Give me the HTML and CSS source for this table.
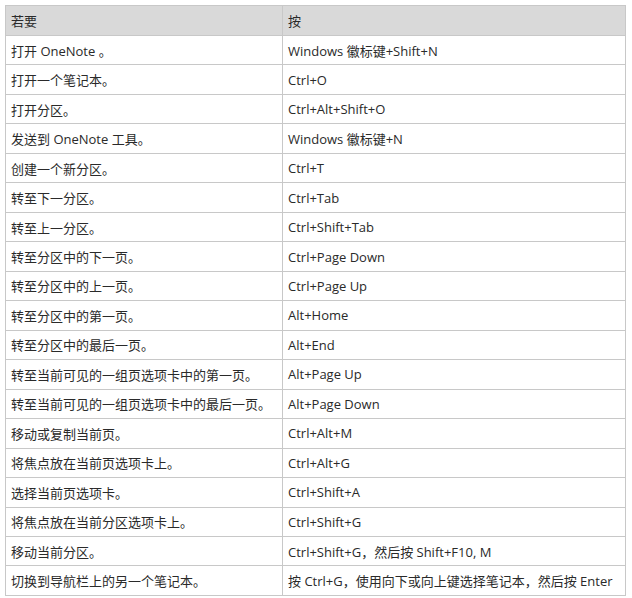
FILE: index.html
```html
<!DOCTYPE html>
<html lang="zh-CN">
<head>
<meta charset="utf-8">
<link rel="stylesheet" href="styles.css">
</head>
<body>
<table class="keys">
<thead>
<tr><th class="c1">若要</th><th class="c2">按</th></tr>
</thead>
<tbody>
<tr><td>打开 OneNote 。</td><td>Windows 徽标键+Shift+N</td></tr>
<tr><td>打开一个笔记本。</td><td>Ctrl+O</td></tr>
<tr><td>打开分区。</td><td>Ctrl+Alt+Shift+O</td></tr>
<tr><td>发送到 OneNote 工具。</td><td>Windows 徽标键+N</td></tr>
<tr><td>创建一个新分区。</td><td>Ctrl+T</td></tr>
<tr><td>转至下一分区。</td><td>Ctrl+Tab</td></tr>
<tr><td>转至上一分区。</td><td>Ctrl+Shift+Tab</td></tr>
<tr><td>转至分区中的下一页。</td><td>Ctrl+Page Down</td></tr>
<tr><td>转至分区中的上一页。</td><td>Ctrl+Page Up</td></tr>
<tr><td>转至分区中的第一页。</td><td>Alt+Home</td></tr>
<tr><td>转至分区中的最后一页。</td><td>Alt+End</td></tr>
<tr><td>转至当前可见的一组页选项卡中的第一页。</td><td>Alt+Page Up</td></tr>
<tr><td>转至当前可见的一组页选项卡中的最后一页。</td><td>Alt+Page Down</td></tr>
<tr><td>移动或复制当前页。</td><td>Ctrl+Alt+M</td></tr>
<tr><td>将焦点放在当前页选项卡上。</td><td>Ctrl+Alt+G</td></tr>
<tr><td>选择当前页选项卡。</td><td>Ctrl+Shift+A</td></tr>
<tr><td>将焦点放在当前分区选项卡上。</td><td>Ctrl+Shift+G</td></tr>
<tr><td>移动当前分区。</td><td>Ctrl+Shift+G，然后按 Shift+F10, M</td></tr>
<tr><td>切换到导航栏上的另一个笔记本。</td><td>按 Ctrl+G，使用向下或向上键选择笔记本，然后按 Enter</td></tr>
</tbody>
</table>
</body>
</html>
```

FILE: styles.css
```css
html, body {
  margin: 0;
  padding: 0;
  background: #ffffff;
}
body {
  padding: 5px;
  font-family: "Open Sans", "Noto Sans CJK SC", sans-serif;
  font-size: 13px;
  color: #2a2a2a;
}
.keys {
  border-collapse: collapse;
  width: 621px;
  table-layout: fixed;
}
.keys .c1 { width: 266px; }
.keys th, .keys td {
  border: 1px solid #c8c8c8;
  text-align: left;
  font-weight: normal;
  padding: 0 5px;
  height: 28.47px;
  white-space: nowrap;
  vertical-align: middle;
}
.keys th {
  background: #d9d9d9;
  height: 29px;
}
```
